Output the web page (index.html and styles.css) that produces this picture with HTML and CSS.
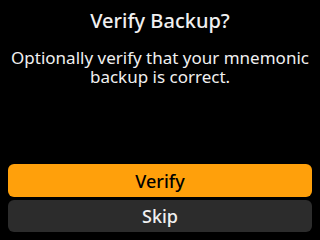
FILE: index.html
```html
<!DOCTYPE html>
<html>
<head>
<meta charset="utf-8">
<link rel="stylesheet" href="styles.css">
</head>
<body>
<div class="screen">
  <div class="content">
    <h1 class="title">Verify Backup?</h1>
    <p class="desc">Optionally verify that your mnemonic backup is correct.</p>
  </div>
  <div class="actions">
    <button class="btn btn-primary">Verify</button>
    <button class="btn btn-secondary">Skip</button>
  </div>
</div>
</body>
</html>
```

FILE: styles.css
```css
html, body {
  margin: 0;
  padding: 0;
  background: #000;
}
.screen {
  width: 320px;
  height: 240px;
  box-sizing: border-box;
  display: flex;
  flex-direction: column;
  justify-content: space-between;
  padding: 0 8px 8px;
  font-family: "Noto Sans", "Open Sans", sans-serif;
  color: #f0f0f0;
}
.content {
  text-align: center;
}
.title {
  margin: 9px 0 0;
  font-size: 20px;
  font-weight: 500;
  line-height: 24px;
}
.desc {
  margin: 15px 0 0;
  font-size: 17px;
  line-height: 19px;
}
.actions {
  display: flex;
  flex-direction: column;
  gap: 3px;
}
.btn {
  border: none;
  border-radius: 6px;
  font-family: inherit;
  font-size: 18px;
  font-weight: 500;
  padding: 0;
}
.btn-primary {
  height: 33px;
  background: #ffa00b;
  color: #000;
}
.btn-secondary {
  height: 32px;
  background: #2c2c2c;
  color: #f0f0f0;
}
```
